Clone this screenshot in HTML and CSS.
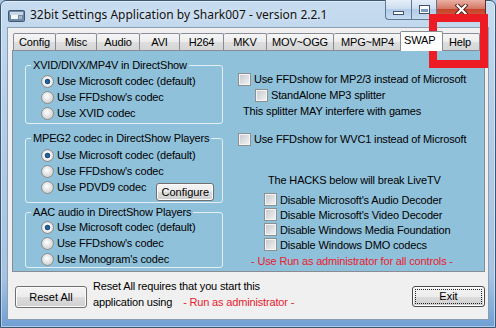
FILE: index.html
```html
<!DOCTYPE html>
<html lang="en">
<head>
    <meta charset="UTF-8">
    <title>32bit Settings Application by Shark007 - version 2.2.1</title>
    <link rel="stylesheet" href="styles.css">
</head>
<body>
    <div class="window">
        <div class="titlebar">
            <svg class="app-icon" width="17" height="12" viewBox="0 0 17 12">
                <rect x="0.5" y="0.5" width="16" height="11" rx="1" fill="#6f8aa6" stroke="#3f5873"/>
                <rect x="2" y="2" width="13" height="3" fill="#c9d8e7"/>
                <rect x="3" y="5" width="7" height="4" fill="#f4f7fa"/>
                <rect x="11" y="6" width="3" height="3" fill="#9fb5cb"/>
            </svg>
            <span class="title">32bit Settings Application by Shark007 - version 2.2.1</span>
            <div class="caption">
                <span class="cap-btn min"><i></i></span>
                <span class="cap-btn max"><i></i></span>
                <span class="cap-btn close">
                    <svg width="13" height="11" viewBox="0 0 13 11">
                        <path d="M2.5 1.5 L10.5 9.5 M10.5 1.5 L2.5 9.5" stroke="#4a1d16" stroke-width="4" stroke-linecap="square"/>
                        <path d="M2.5 1.5 L10.5 9.5 M10.5 1.5 L2.5 9.5" stroke="#fff" stroke-width="2.2" stroke-linecap="square"/>
                    </svg>
                </span>
            </div>
        </div>

        <div class="client">
            <div class="tabs">
                <span class="tab">Config</span>
                <span class="tab">Misc</span>
                <span class="tab">Audio</span>
                <span class="tab">AVI</span>
                <span class="tab">H264</span>
                <span class="tab">MKV</span>
                <span class="tab">MOV~OGG</span>
                <span class="tab">MPG~MP4</span>
                <span class="tab active">SWAP</span>
                <span class="tab">Help</span>
            </div>

            <div class="panel">
                <div class="col">
                    <fieldset class="group g1">
                        <legend>XVID/DIVX/MP4V in DirectShow</legend>
                        <div class="opt"><span class="radio on"></span>Use Microsoft codec (default)</div>
                        <div class="opt"><span class="radio"></span>Use FFDshow's codec</div>
                        <div class="opt"><span class="radio"></span>Use XVID codec</div>
                    </fieldset>
                    <fieldset class="group g2">
                        <legend>MPEG2 codec in DirectShow Players</legend>
                        <div class="opt"><span class="radio on"></span>Use Microsoft codec (default)</div>
                        <div class="opt"><span class="radio"></span>Use FFDshow's codec</div>
                        <div class="opt"><span class="radio"></span>Use PDVD9 codec<button class="btn configure">Configure</button></div>
                    </fieldset>
                    <fieldset class="group g3">
                        <legend>AAC audio in DirectShow Players</legend>
                        <div class="opt"><span class="radio on"></span>Use Microsoft codec (default)</div>
                        <div class="opt"><span class="radio"></span>Use FFDshow's codec</div>
                        <div class="opt"><span class="radio"></span>Use Monogram's codec</div>
                    </fieldset>
                </div>

                <div class="col checks">
                    <div class="chk first"><span class="box"></span>Use FFDshow for MP2/3 instead of Microsoft</div>
                    <div class="chk sub"><span class="box"></span>StandAlone MP3 splitter</div>
                    <div class="note">This splitter MAY interfere with games</div>
                    <div class="chk wvc1"><span class="box"></span>Use FFDshow for WVC1 instead of Microsoft</div>

                    <div class="hacks-title">The HACKS below will break LiveTV</div>
                    <div class="chk hack first-hack"><span class="box"></span>Disable Microsoft's Audio Decoder</div>
                    <div class="chk hack"><span class="box"></span>Disable Microsoft's Video Decoder</div>
                    <div class="chk hack"><span class="box"></span>Disable Windows Media Foundation</div>
                    <div class="chk hack"><span class="box"></span>Disable Windows DMO codecs</div>
                    <div class="red admin-note">- Use Run as administrator for all controls -</div>
                </div>
            </div>

            <div class="footer">
                <button class="btn reset">Reset All</button>
                <div class="reset-note">
                    <div>Reset All requires that you start this</div>
                    <div>application using <span class="red">- Run as administrator -</span></div>
                </div>
                <button class="btn exit"><span>Exit</span></button>
            </div>
        </div>
    </div>

    <div class="callout"></div>
</body>
</html>
```

FILE: styles.css
```css
/* Reset */
* {
    margin: 0;
    padding: 0;
    box-sizing: border-box;
}

body {
    width: 496px;
    height: 328px;
    overflow: hidden;
    font-family: "Liberation Sans", Arial, sans-serif;
    font-size: 11px;
    letter-spacing: -0.16px;
    color: #000;
    background: #a9c6e3;
}

/* Aero window frame */
.window {
    height: 328px;
    display: flex;
    flex-direction: column;
    border: 1px solid #3a5775;
    border-radius: 6px 6px 0 0;
    padding: 0 6px 7px;
    background: linear-gradient(180deg, #c6dbef 0%, #b2cde8 35%, #a5c3e2 85%, #6f9fd4 100%);
    box-shadow: inset 0 0 0 1px rgba(255, 255, 255, 0.45);
}

.titlebar {
    height: 26px;
    display: flex;
    align-items: flex-start;
}

.app-icon {
    margin: 9px 0 0 1px;
}

.title {
    margin: 6px 0 0 5px;
    font-family: "Noto Sans", "Open Sans", sans-serif;
    font-size: 12px;
    line-height: 16px;
    letter-spacing: 0;
    color: #111;
    text-shadow: 0 0 6px rgba(255, 255, 255, 0.9);
}

/* Caption buttons */
.caption {
    display: flex;
    margin: -1px 3px 0 auto;
}

.cap-btn {
    height: 20px;
    display: flex;
    align-items: center;
    justify-content: center;
    border: 1px solid #5f7896;
    border-top: 0;
    background: linear-gradient(#e6eef8, #cddef0 45%, #b3cbe7 50%, #c7dbf0);
}

.min {
    width: 26px;
    border-right: 0;
    border-radius: 0 0 0 4px;
}

.min i {
    width: 11px;
    height: 4px;
    margin-top: 6px;
    background: #fff;
    border: 1px solid #3d536d;
}

.max {
    width: 26px;
}

.max i {
    width: 11px;
    height: 9px;
    background: #7f9bbb;
    border: 1px solid #3d536d;
    box-shadow: inset 0 0 0 1px #fff, inset 0 2px 0 1px #fff;
}

.close {
    width: 49px;
    border-color: #5a2d27;
    border-left: 0;
    border-radius: 0 0 4px 0;
    background: linear-gradient(#eab0a4, #d57866 45%, #c5432c 50%, #d2653f);
}

/* Client area */
.client {
    flex: 1;
    display: flex;
    flex-direction: column;
    background: #f0f0f0;
    border: 1px solid #8b9eb4;
    padding: 5px 3px 0 4px;
}

/* Tab strip */
.tabs {
    display: grid;
    grid-template-columns: 43px 41px 43px 40px 44px 43px 67px 68px 39px 39px;
    height: 17px;
    margin-left: 1px;
}

.tab {
    border: 1px solid #898c95;
    border-left: 0;
    border-bottom: 0;
    border-radius: 2px 2px 0 0;
    background: linear-gradient(#f6f6f6, #ececec 50%, #dedede 51%, #d6d6d6);
    text-align: center;
    line-height: 16px;
    white-space: nowrap;
}

.tab:first-child {
    border-left: 1px solid #898c95;
}

.tab.active {
    margin: -2px -2px -1px -2px;
    padding-left: 3px;
    text-align: left;
    border-left: 1px solid #898c95;
    background: #fff;
    z-index: 1;
}

/* Tab page */
.panel {
    height: 222px;
    display: grid;
    grid-template-columns: 198px 1fr;
    column-gap: 15px;
    align-items: start;
    padding-left: 12px;
    border: 1px solid #898c95;
    background: #90c1da;
}

.col {
    display: flex;
    flex-direction: column;
}

/* Group boxes */
.group {
    border: 1px solid #e4eef4;
    border-radius: 3px;
    padding: 2px 4px 2px 5px;
}

.group legend {
    padding: 0 2px;
    line-height: 12px;
}

.g1 {
    margin-top: 8px;
}

.g2 {
    margin-top: 8px;
    padding-top: 3px;
    padding-bottom: 7px;
}

.g3 {
    margin-top: 3px;
    padding-top: 1px;
    padding-bottom: 0;
}

.opt {
    height: 16px;
    display: flex;
    align-items: center;
    gap: 3px;
    margin-left: 10px;
    white-space: nowrap;
}

.radio {
    width: 13px;
    height: 13px;
    flex: none;
    border: 1px solid #8a8c8e;
    border-radius: 50%;
    background: radial-gradient(circle at 45% 40%, #ffffff 0, #f2f2f2 2px, #d6d6d6 6px);
}

.radio.on {
    background: radial-gradient(circle at 50% 50%, #2d6fa8 0, #1c4c80 2.4px, #ffffff 3.2px, #f0f0f0 4px, #d6d6d6 6px);
}

/* Checkboxes */
.checks {
    white-space: nowrap;
}

.chk {
    height: 16px;
    display: flex;
    align-items: center;
    gap: 3px;
}

.box {
    width: 13px;
    height: 13px;
    flex: none;
    border: 1px solid #8e8f8f;
    background: linear-gradient(135deg, #c3c7cd, #f4f4f4);
    box-shadow: inset 0 0 0 1px #f4f4f4;
}

.chk.first {
    margin-top: 20px;
}

.chk.sub {
    padding-left: 17px;
}

.note {
    height: 16px;
    line-height: 16px;
    padding-left: 5px;
}

.chk.wvc1 {
    margin-top: 12px;
}

.hacks-title {
    margin-top: 25px;
    height: 16px;
    line-height: 16px;
    padding-left: 30px;
}

.chk.hack {
    height: 15px;
    padding-left: 26px;
}

.chk.first-hack {
    margin-top: 4px;
}

.red {
    color: #e8202e;
}

.admin-note {
    height: 16px;
    line-height: 16px;
    margin-top: 1px;
    padding-left: 13px;
}

/* Buttons */
.btn {
    font: inherit;
    color: #000;
    border: 1px solid #707070;
    border-radius: 3px;
    background: linear-gradient(#f4f4f4, #ececec 50%, #dddddd 51%, #cfcfcf);
    box-shadow: inset 0 0 0 1px #fcfcfc;
    cursor: pointer;
}

.configure {
    width: 58px;
    height: 18px;
    margin: 4px 0 0 7px;
    align-self: flex-start;
}

.footer {
    display: flex;
    align-items: flex-start;
    padding: 6px 0 0 3px;
}

.reset {
    width: 72px;
    height: 22px;
    margin-top: 8px;
}

.reset-note {
    margin-left: 6px;
    line-height: 16px;
    white-space: nowrap;
}

.reset-note .red {
    margin-left: 8px;
}

.exit {
    width: 73px;
    height: 21px;
    margin: 8px 0 0 auto;
    padding: 2px;
    border-color: #4a4a4a;
}

.exit span {
    display: block;
    height: 100%;
    line-height: 13px;
    border: 1px dotted #222;
}

/* Red annotation box */
.callout {
    position: absolute;
    left: 429px;
    top: 14px;
    width: 59px;
    height: 54px;
    border: 8px solid #ed1c24;
}
```
